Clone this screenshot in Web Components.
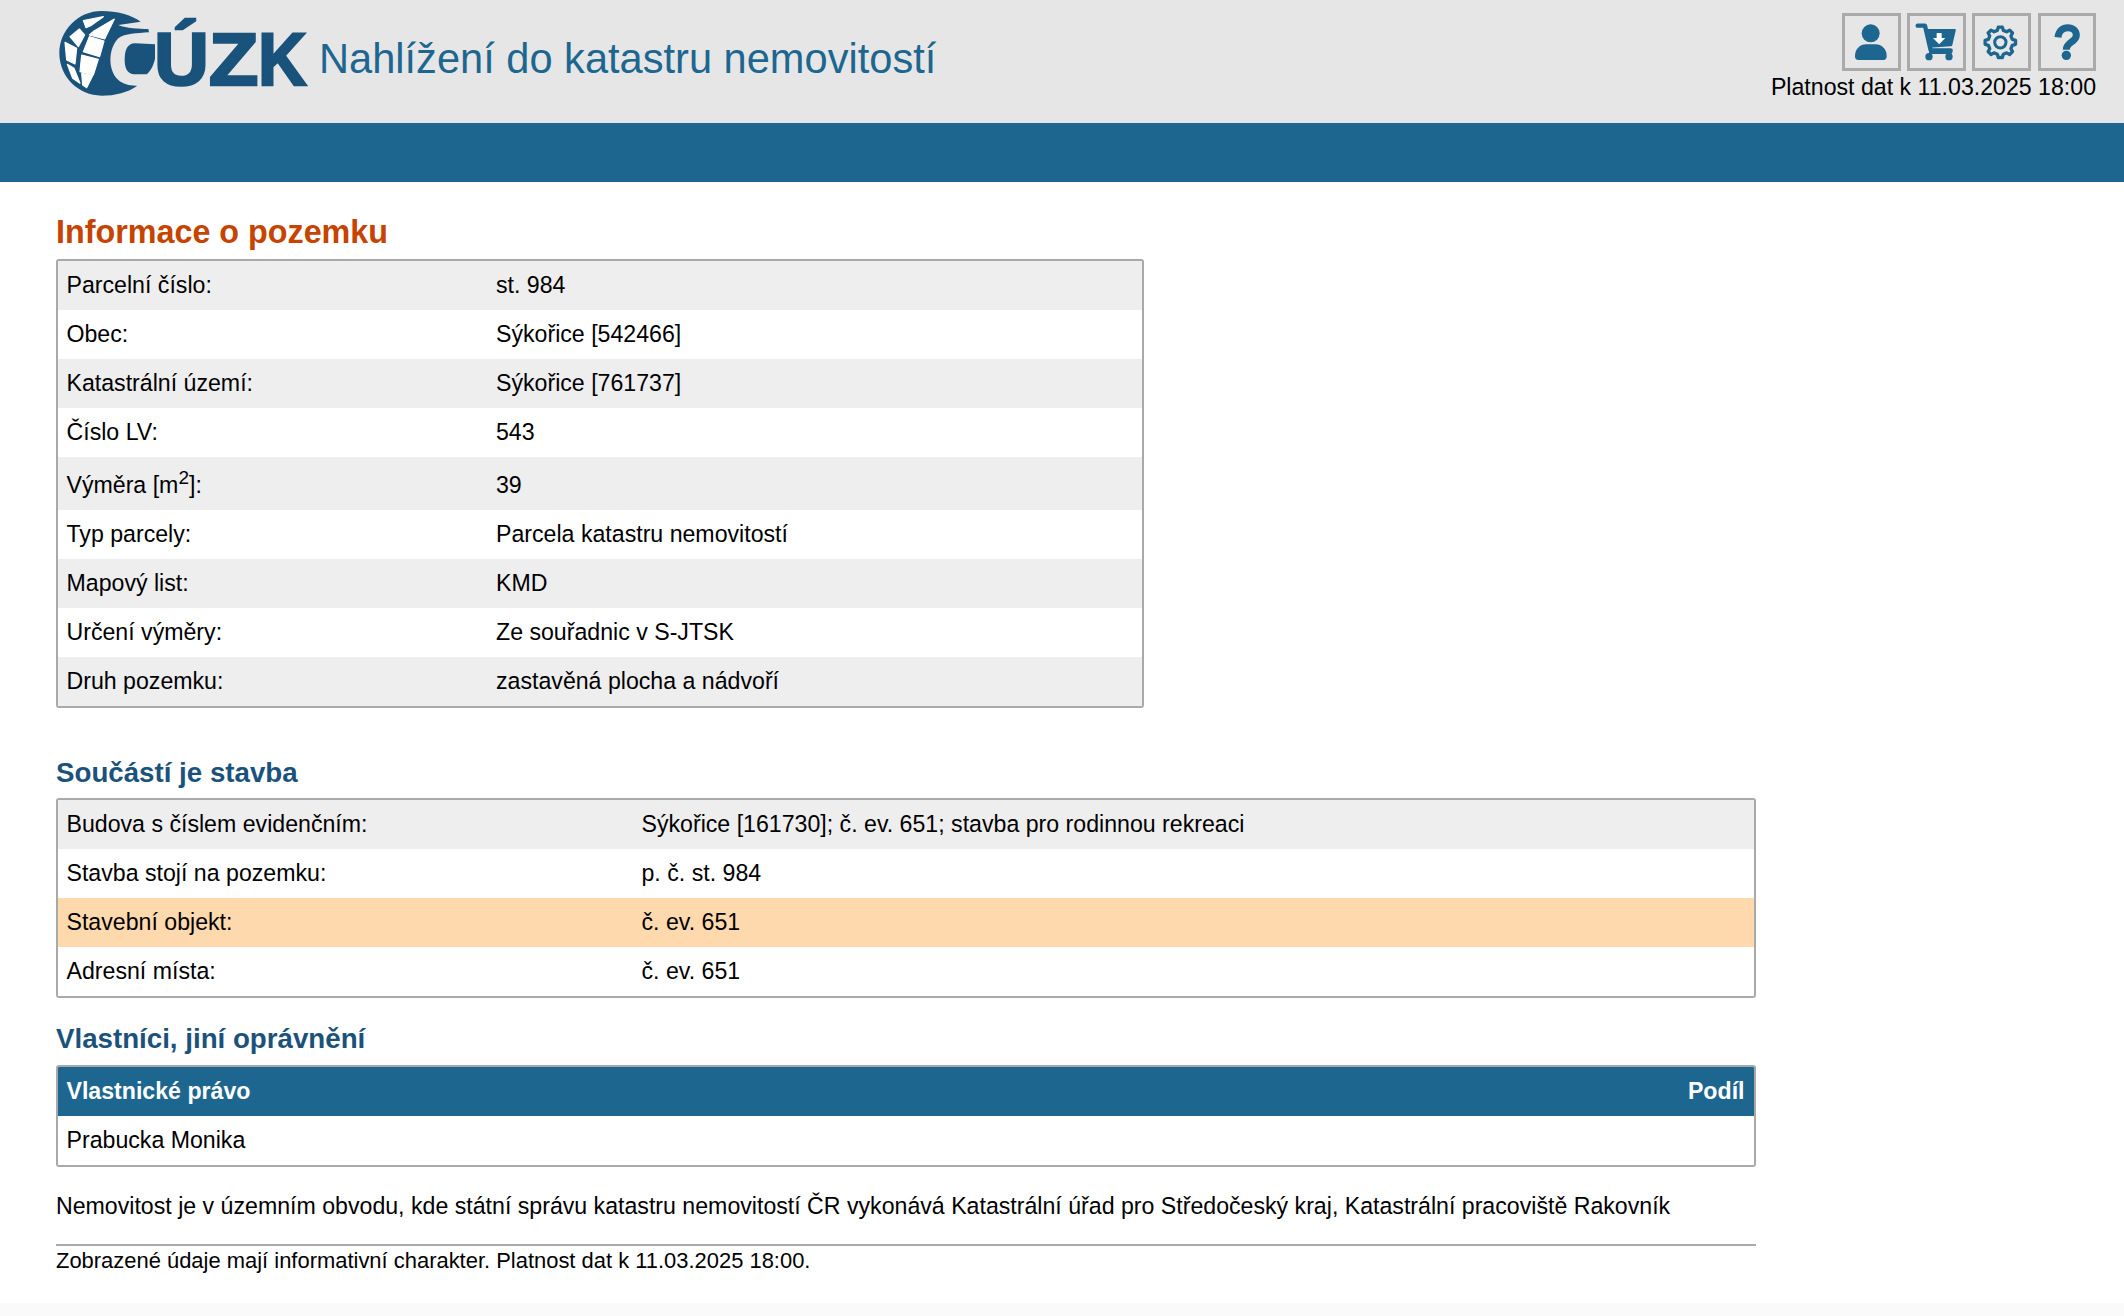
<!DOCTYPE html>
<html lang="cs">
<head>
<meta charset="utf-8">
<title>Nahlížení do katastru nemovitostí</title>
<style>
html,body{margin:0;padding:0;background:#fff}
body{font-family:"Liberation Sans",Arial,sans-serif;font-size:23.15px;color:#000}
</style>
</head>
<body>
<template id="tpl-header">
<style>
:host{display:block;height:182px;background:#e6e6e6;font-family:"Liberation Sans",Arial,sans-serif;position:relative}
.top{height:123px;display:flex;justify-content:space-between;box-sizing:border-box;padding:0 28px 0 50px}
.brand{display:flex;align-items:flex-start;padding-top:5px}
.title{font-size:41.6px;color:#1d6690;line-height:46px;margin:31px 0 0 2px;white-space:nowrap}
.right{display:flex;flex-direction:column;align-items:flex-end;padding-top:13px}
.btns{display:flex;gap:6px}
.stamp{font-size:23.15px;line-height:28px;margin-top:2px;white-space:nowrap;color:#000}
.bar{height:59px;background:#1d6690}
</style>
<div class="top">
 <div class="brand"><slot name="logo"></slot><div class="title"><slot name="title"></slot></div></div>
 <div class="right"><div class="btns"><slot name="btn"></slot></div><div class="stamp"><slot name="stamp"></slot></div></div>
</div>
<div class="bar"></div>
</template>

<template id="tpl-logo">
<style>:host{display:block;width:267px;height:110px;flex:none}svg{display:block}
text{font-family:"Liberation Sans",Arial,sans-serif;font-weight:700;fill:#19527a;stroke:#19527a;stroke-width:8}</style>
<svg width="267" height="110" viewBox="150 15 801 330" role="img" aria-label="ČÚZK">
<g transform="translate(150,15)">
<path fill="#19527a" d="M155 18C200 18 245 30 272 50L205 60C230 70 265 72 295 72L297 82C260 85 225 85 205 100C175 130 172 195 205 225C220 238 240 243 262 242C235 262 195 272 155 272C85 272 28 215 28 145C28 75 85 18 155 18Z"/>
<path fill="#19527a" d="M224 165C224 135 232 115 255 115L315 118L315 160C312 180 302 198 290 208L250 208C232 205 224 190 224 165Z"/>
<g fill="#fff" stroke="#fff" stroke-width="3.5" stroke-linejoin="round">
<path d="M100 47L160 35L122 62L108 68Z"/>
<path d="M132 78L193 42L164 102L118 90Z"/>
<path d="M60 95L88 72L104 90L85 125Z"/>
<path d="M118 95L162 108L149 155L100 140Z"/>
<path d="M45 112L80 130L75 177L50 165Z"/>
<path d="M95 150L145 163L130 210L90 200Z"/>
<path d="M52 178L72 190L90 235L68 220Z"/>
<path d="M95 205L128 212L110 248L98 240Z"/>
</g>
</g>
<g transform="translate(390,15)">
<text transform="translate(73,239) scale(1.02,1)" font-size="222">Ú</text>
<text transform="translate(237,239) scale(1.09,1)" font-size="222">Z</text>
<text transform="translate(385,239) scale(.9,1)" font-size="222">K</text>
</g>
</svg>
</template>

<template id="tpl-btn">
<style>:host{display:block;box-sizing:border-box;width:59px;height:58px;border:3px solid #aaa;position:relative}
::slotted(svg){position:absolute;left:-3px;top:-3px;width:59px;height:58px;display:block}</style>
<slot></slot>
</template>

<template id="tpl-main">
<style>:host{display:block;padding:0 0 0 56px;font-family:"Liberation Sans",Arial,sans-serif;color:#000;width:1700px;height:1121px;overflow:hidden}</style>
<slot></slot>
</template>

<template id="tpl-title">
<style>:host{display:block;line-height:var(--lh,36px);font-weight:700;font-size:var(--fs,27.7px);color:var(--c,#1b527b);margin:var(--m,0);white-space:nowrap}</style>
<slot></slot>
</template>

<template id="tpl-panel">
<style>:host{display:block;box-sizing:border-box;border:2.4px solid #a9a9a9;border-radius:3px;width:var(--w,1700px);background:#fff;margin:var(--m,0);overflow:hidden}</style>
<slot></slot>
</template>

<template id="tpl-row">
<style>:host{display:grid;grid-template-columns:var(--col,429.500px) 1fr;align-items:center;height:var(--h,49px);box-sizing:border-box;padding:0 9.500px 0 8.500px;background:var(--bg,#fff);font-size:23.15px;white-space:nowrap}
:host([shade]){--bg:#eeeeee}
:host([hl]){--bg:#fed9ad}
:host([head]){--bg:#1d6690;color:#fff;font-weight:700;grid-template-columns:1fr auto}
:host([tall]){--h:53.500px;padding-top:3px}
</style>
<div><slot name="k"></slot></div><div><slot name="v"></slot></div>
</template>

<template id="tpl-foot">
<style>:host{display:block;height:13px;background:#fafafa}</style>
</template>

<script>
function def(name,tpl){
  customElements.define(name,class extends HTMLElement{
    constructor(){super();this.attachShadow({mode:'open'}).appendChild(document.getElementById(tpl).content.cloneNode(true));}
  });
}
def('cuzk-header','tpl-header');def('cuzk-logo','tpl-logo');def('cuzk-btn','tpl-btn');def('cuzk-main','tpl-main');
def('cuzk-title','tpl-title');def('cuzk-panel','tpl-panel');def('cuzk-row','tpl-row');def('cuzk-foot','tpl-foot');
</script>

<cuzk-header>
 <cuzk-logo slot="logo"></cuzk-logo>
 <span slot="title">Nahlížení do katastru nemovitostí</span>
 <cuzk-btn slot="btn"><svg viewBox="0 0 177 174"><circle cx="86" cy="61" r="27" fill="#1d6690"/><path fill="#1d6690" d="M39 128C39 108 55 94 72 94L101 94C118 94 134 108 134 128L134 131C134 137 129 141 124 141L49 141C44 141 39 137 39 131Z"/></svg></cuzk-btn>
 <cuzk-btn slot="btn"><svg viewBox="0 0 177 174"><path fill="none" stroke="#1d6690" stroke-width="13" stroke-linecap="round" stroke-linejoin="round" d="M32 38L54 38L71 112L131 112"/><path fill="#1d6690" d="M51 48L143 48C146 48 147 50 146 53L136 96C135 99 133 100 130 100L68 104Z"/><path fill="#fff" d="M89 60L104 60L104 75L115 75L96.500 94L78 75L89 75Z"/><circle cx="66" cy="131" r="11" fill="#1d6690"/><circle cx="126" cy="131" r="11" fill="#1d6690"/><rect x="66" y="111" width="70" height="12" rx="5" fill="#1d6690"/></svg></cuzk-btn>
 <cuzk-btn slot="btn"><svg viewBox="0 0 177 174"><path id="gear" fill="none" stroke="#1d6690" stroke-width="10" stroke-linejoin="round" d=""/><circle cx="85" cy="88" r="17" fill="none" stroke="#1d6690" stroke-width="9"/></svg></cuzk-btn>
 <cuzk-btn slot="btn" style="width:58px;margin-left:1px"><svg viewBox="0 0 174 174" style="width:58px"><path fill="none" stroke="#1d6690" stroke-width="21" d="M60 73C62 52 76 44 89 44C105 44 115 54 115 67C115 88 85 86 85 110"/><circle cx="85" cy="127" r="14" fill="#1d6690"/></svg></cuzk-btn>
 <span slot="stamp">Platnost dat k 11.03.2025 18:00</span>
</cuzk-header>
<script>
(function(){
  var hdr=document.querySelector('cuzk-header'),p=hdr.querySelector('#gear'),d='',n=8,cx=85,cy=88;
  for(var i=0;i<n;i++){
    var a=(i/n)*2*Math.PI+Math.PI/8-Math.PI/2+Math.PI/8,w=Math.PI/n;
    var pts=[[37,a-w*.62],[46,a-w*.34],[46,a+w*.34],[37,a+w*.62]];
    pts.forEach(function(q,j){
      var x=cx+q[0]*Math.cos(q[1]),y=cy+q[0]*Math.sin(q[1]);
      d+=((i===0&&j===0)?'M':'L')+x.toFixed(1)+' '+y.toFixed(1);
    });
  }
  p.setAttribute('d',d+'Z');
})();
</script>

<cuzk-main>
 <cuzk-title style="--fs:32.3px;--c:#c64300;--lh:40px;--m:29.6px 0 7.4px">Informace o pozemku</cuzk-title>
 <cuzk-panel style="--w:1088px;--col:429.500px;--m:0 0 47px">
  <cuzk-row shade><span slot="k">Parcelní číslo:</span><span slot="v">st. 984</span></cuzk-row>
  <cuzk-row><span slot="k">Obec:</span><span slot="v">Sýkořice [542466]</span></cuzk-row>
  <cuzk-row shade><span slot="k">Katastrální území:</span><span slot="v">Sýkořice [761737]</span></cuzk-row>
  <cuzk-row><span slot="k">Číslo LV:</span><span slot="v">543</span></cuzk-row>
  <cuzk-row shade tall><span slot="k">Výměra [m<sup style="line-height:0;font-size:19px">2</sup>]:</span><span slot="v">39</span></cuzk-row>
  <cuzk-row><span slot="k">Typ parcely:</span><span slot="v">Parcela katastru nemovitostí</span></cuzk-row>
  <cuzk-row shade><span slot="k">Mapový list:</span><span slot="v">KMD</span></cuzk-row>
  <cuzk-row><span slot="k">Určení výměry:</span><span slot="v">Ze souřadnic v S-JTSK</span></cuzk-row>
  <cuzk-row shade><span slot="k">Druh pozemku:</span><span slot="v">zastavěná plocha a nádvoří</span></cuzk-row>
 </cuzk-panel>
 <cuzk-title style="--m:0 0 6.6px">Součástí je stavba</cuzk-title>
 <cuzk-panel style="--col:575px;--m:0 0 23px">
  <cuzk-row shade><span slot="k">Budova s číslem evidenčním:</span><span slot="v">Sýkořice [161730]; č. ev. 651; stavba pro rodinnou rekreaci</span></cuzk-row>
  <cuzk-row><span slot="k">Stavba stojí na pozemku:</span><span slot="v">p. č. st. 984</span></cuzk-row>
  <cuzk-row hl><span slot="k">Stavební objekt:</span><span slot="v">č. ev. 651</span></cuzk-row>
  <cuzk-row><span slot="k">Adresní místa:</span><span slot="v">č. ev. 651</span></cuzk-row>
 </cuzk-panel>
 <cuzk-title style="--m:0 0 8px">Vlastníci, jiní oprávnění</cuzk-title>
 <cuzk-panel>
  <cuzk-row head><span slot="k">Vlastnické právo</span><span slot="v">Podíl</span></cuzk-row>
  <cuzk-row style="grid-template-columns:1fr auto"><span slot="k">Prabucka Monika</span></cuzk-row>
 </cuzk-panel>
 <div style="font-size:23.15px;line-height:28px;margin-top:25px;white-space:nowrap">Nemovitost je v územním obvodu, kde státní správu katastru nemovitostí ČR vykonává Katastrální úřad pro Středočeský kraj, Katastrální pracoviště Rakovník</div>
 <div style="border-top:2px solid #a9a9a9;margin-top:24px;padding-top:1px;font-size:21.95px;line-height:28px;white-space:nowrap">Zobrazené údaje mají informativní charakter. Platnost dat k 11.03.2025 18:00.</div>
</cuzk-main>
<cuzk-foot></cuzk-foot>
</body>
</html>
